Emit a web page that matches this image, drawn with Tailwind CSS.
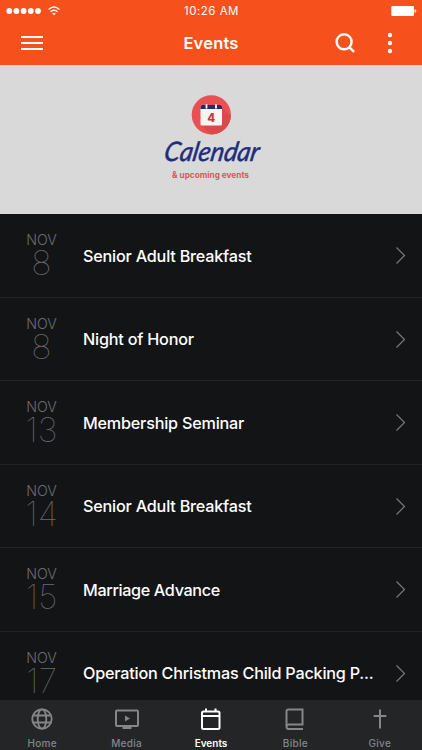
<!DOCTYPE html>
<html lang="en">
<head>
<meta charset="utf-8">
<title>Events</title>
<script src="https://cdn.jsdelivr.net/npm/@tailwindcss/browser@4"></script>
</head>
<body class="bg-[#131416] font-[Inter,sans-serif]">
<div class="flex h-[750px] w-[422px] flex-col overflow-hidden">
  <header class="h-[65px] shrink-0 bg-[#f6511d] text-white">
    <div class="grid h-[21px] grid-cols-3 items-center pl-[6px] pr-[5px]">
      <div class="flex items-center gap-[6px]">
        <svg width="36" height="8" fill="#fff"><circle cx="3.3" cy="4" r="2.9"/><circle cx="10.4" cy="4" r="2.9"/><circle cx="17.6" cy="4" r="2.9"/><circle cx="24.8" cy="4" r="2.9"/><circle cx="32" cy="4" r="2.9"/></svg>
        <svg width="12" height="10" viewBox="0 0 12 10" fill="none" stroke="#fff" stroke-width="1.4"><path d="M.6 3.6Q6-1.4 11.4 3.6M2.5 5.7Q6 2.6 9.5 5.7"/><path d="M6 9.2L4.2 7.4Q6 6 7.8 7.4Z" fill="#fff" stroke="none"/></svg>
      </div>
      <div class="pt-[2px] text-center text-[11.5px] leading-none tracking-[0.5px]">10:26 AM</div>
      <svg class="justify-self-end" width="26" height="10" fill="#fff"><rect x="0.3" width="22.7" height="10" rx="1"/><rect x="23.6" y="3.5" width="1.5" height="3" rx=".7"/></svg>
    </div>
    <div class="grid h-[44px] grid-cols-3 items-center">
      <svg class="ml-[21px]" width="22" height="16" stroke="#fff" stroke-width="1.8"><path d="M0 2h22M0 8h22M0 14h22"/></svg>
      <h1 class="text-center text-[16.5px] font-semibold leading-none tracking-[0.2px]">Events</h1>
      <div class="flex items-center justify-end gap-[32px] pr-[29px]">
        <svg width="20" height="20" fill="none" stroke="#fff" stroke-width="2.4"><circle cx="9.1" cy="8.800" r="7.500"/><path d="M14 13.800l5 5"/></svg>
        <svg width="6" height="22" fill="#fff"><circle cx="3" cy="3" r="2.2"/><circle cx="3" cy="11" r="2.2"/><circle cx="3" cy="19" r="2.2"/></svg>
      </div>
    </div>
  </header>

  <section class="flex h-[149px] shrink-0 justify-center bg-[#d9d9d9] pt-[29px]">
    <svg class="overflow-visible" width="120" height="100" viewBox="151 94 120 100">
      <defs><clipPath id="disc"><circle cx="211.3" cy="114.8" r="19.6"/></clipPath></defs>
      <circle cx="211.3" cy="114.8" r="19.6" fill="#e85052"/>
      <path clip-path="url(#disc)" d="M221 106L240 125V145H221L201 124.500Z" fill="#d84a4c"/>
      <rect x="200.500" y="105" width="21.500" height="20.500" rx="1.500" fill="#f7f5f3"/>
      <path d="M200.500 109v-2.500q0-1.500 1.500-1.500h18.500q1.500 0 1.500 1.500V109z" fill="#232c72"/>
      <path d="M206.500 104.800v3M216 104.800v3" stroke="#fff" stroke-width="1.800" stroke-linecap="round"/>
      <text x="211.200" y="121.800" text-anchor="middle" font-family="Inter, sans-serif" font-size="11.500" font-weight="800" fill="#c9383f">4</text>
      <text x="163" y="161.500" transform="translate(163 161.500) skewX(-10) translate(-163 -161.500)" textLength="95" lengthAdjust="spacingAndGlyphs" font-family="Lato, sans-serif" font-style="italic" font-size="27" fill="#1d2d7c" stroke="#1d2d7c" stroke-width=".5">Calendar</text>
      <text x="172" y="177.500" textLength="77" lengthAdjust="spacingAndGlyphs" font-family="Inter, sans-serif" font-size="8.800" font-weight="700" fill="#df5559">&amp; upcoming events</text>
    </svg>
  </section>

  <main class="min-h-0 flex-1 overflow-hidden text-white">
    <div class="flex h-[83.5px] items-center border-b border-[#222325]">
      <div class="w-[83px] shrink-0 pt-[2px] text-center text-[#6c6d70]"><div class="text-[14.2px] font-light leading-[14px]">NOV</div><div class="text-[34px] font-[100] leading-[32px]">8</div></div>
      <div class="flex-1 whitespace-nowrap pt-px text-[16.2px] font-medium tracking-[-0.21px]">Senior Adult Breakfast</div>
      <svg class="mr-[16px]" width="11" height="18" fill="none" stroke="#77787a" stroke-width="1.2"><path d="M1.500 1.500L9.500 9.500L1.500 17.500"/></svg>
    </div>
    <div class="flex h-[83.5px] items-center border-b border-[#222325]">
      <div class="w-[83px] shrink-0 pt-[2px] text-center text-[#6c6d70]"><div class="text-[14.2px] font-light leading-[14px]">NOV</div><div class="text-[34px] font-[100] leading-[32px]">8</div></div>
      <div class="flex-1 whitespace-nowrap text-[16.2px] font-medium tracking-[-0.21px]">Night of Honor</div>
      <svg class="mr-[16px]" width="11" height="18" fill="none" stroke="#77787a" stroke-width="1.2"><path d="M1.500 1.500L9.500 9.500L1.500 17.500"/></svg>
    </div>
    <div class="flex h-[83.5px] items-center border-b border-[#222325]">
      <div class="w-[83px] shrink-0 pt-[2px] text-center text-[#6c6d70]"><div class="text-[14.2px] font-light leading-[14px]">NOV</div><div class="text-[34px] font-[100] leading-[32px]">13</div></div>
      <div class="flex-1 whitespace-nowrap pt-px text-[16.2px] font-medium tracking-[-0.21px]">Membership Seminar</div>
      <svg class="mr-[16px]" width="11" height="18" fill="none" stroke="#77787a" stroke-width="1.2"><path d="M1.500 1.500L9.500 9.500L1.500 17.500"/></svg>
    </div>
    <div class="flex h-[83.5px] items-center border-b border-[#222325]">
      <div class="w-[83px] shrink-0 pt-[2px] text-center text-[#6c6d70]"><div class="text-[14.2px] font-light leading-[14px]">NOV</div><div class="text-[34px] font-[100] leading-[32px]">14</div></div>
      <div class="flex-1 whitespace-nowrap text-[16.2px] font-medium tracking-[-0.21px]">Senior Adult Breakfast</div>
      <svg class="mr-[16px]" width="11" height="18" fill="none" stroke="#77787a" stroke-width="1.2"><path d="M1.500 1.500L9.500 9.500L1.500 17.500"/></svg>
    </div>
    <div class="flex h-[83.5px] items-center border-b border-[#222325]">
      <div class="w-[83px] shrink-0 pt-[2px] text-center text-[#6c6d70]"><div class="text-[14.2px] font-light leading-[14px]">NOV</div><div class="text-[34px] font-[100] leading-[32px]">15</div></div>
      <div class="flex-1 whitespace-nowrap pt-px text-[16.2px] font-medium tracking-[-0.35px]">Marriage Advance</div>
      <svg class="mr-[16px]" width="11" height="18" fill="none" stroke="#77787a" stroke-width="1.2"><path d="M1.500 1.500L9.500 9.500L1.500 17.500"/></svg>
    </div>
    <div class="flex h-[83.5px] items-center">
      <div class="w-[83px] shrink-0 pt-[2px] text-center text-[#6c6d70]"><div class="text-[14.2px] font-light leading-[14px]">NOV</div><div class="text-[34px] font-[100] leading-[32px]">17</div></div>
      <div class="flex-1 whitespace-nowrap text-[16.2px] font-medium tracking-[-0.21px]">Operation Christmas Child Packing P...</div>
      <svg class="mr-[16px]" width="11" height="18" fill="none" stroke="#77787a" stroke-width="1.2"><path d="M1.500 1.500L9.500 9.500L1.500 17.500"/></svg>
    </div>
  </main>

  <nav class="grid h-[50px] shrink-0 grid-cols-5 bg-[#242527] pt-[7px] text-center text-[10px] font-medium leading-none tracking-[0.3px] text-[#858688]">
    <div class="flex flex-col items-center gap-[7px]">
      <svg width="24" height="24" viewBox="0 0 24 24" fill="none" stroke="currentColor" stroke-width="1.800"><circle cx="12" cy="12" r="9.700"/><ellipse cx="12" cy="12" rx="4.300" ry="9.700"/><path d="M3.300 8.500h17.400M3.300 15.500h17.400"/></svg>
      <span>Home</span>
    </div>
    <div class="flex flex-col items-center gap-[7px]">
      <svg width="26" height="24" fill="none" stroke="currentColor" stroke-width="2"><rect x="2" y="3.500" width="22" height="15.500" rx="1"/><path d="M8.500 21h9"/><path d="M11 8.500v6l5-3z" fill="currentColor" stroke="none"/></svg>
      <span>Media</span>
    </div>
    <div class="flex flex-col items-center gap-[7px] font-semibold text-white">
      <svg width="24" height="24" fill="none" stroke="currentColor" stroke-width="2"><rect x="3" y="4.500" width="17.500" height="17.500" rx="1.500"/><path d="M3 9h17.500M7 1.500v3M16.500 1.500v3"/></svg>
      <span class="tracking-normal">Events</span>
    </div>
    <div class="flex flex-col items-center gap-[7px]">
      <svg width="24" height="24" fill="none" stroke="currentColor" stroke-width="2"><path d="M20 22H5.800Q3.500 22 3.500 19.500V4.500Q3.500 2.500 5.500 2.500H19.500V17.500H6Q3.500 17.500 3.500 19.700"/></svg>
      <span>Bible</span>
    </div>
    <div class="flex flex-col items-center gap-[7px]">
      <svg width="24" height="24" fill="none" stroke="currentColor" stroke-width="2"><path d="M12 2.500v19M5.700 9h12.600"/></svg>
      <span>Give</span>
    </div>
  </nav>
</div>
</body>
</html>
